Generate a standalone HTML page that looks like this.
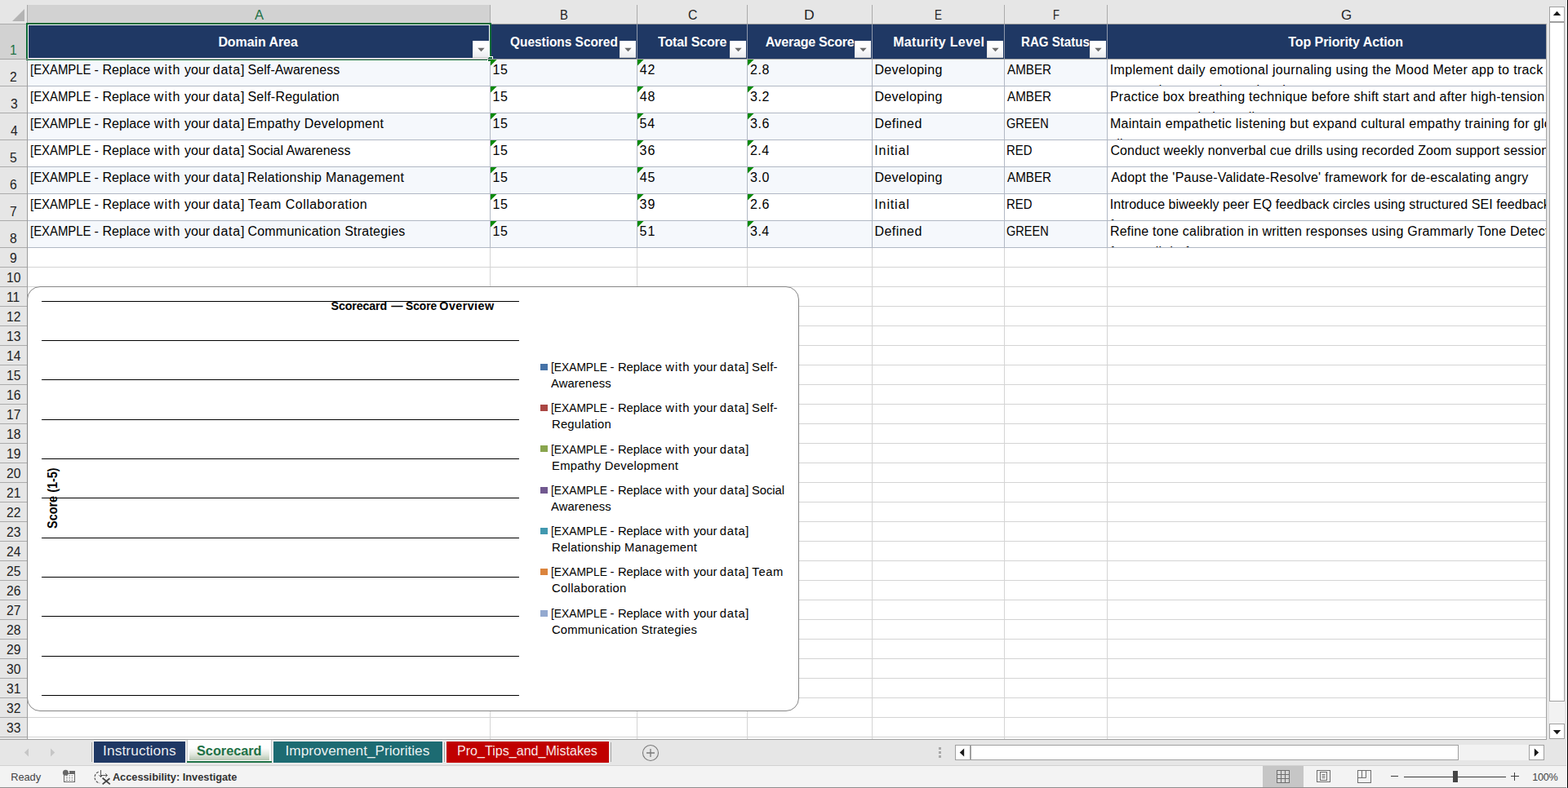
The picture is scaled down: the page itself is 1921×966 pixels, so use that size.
<!DOCTYPE html>
<html lang="en"><head><meta charset="utf-8"><title>Scorecard</title>
<style>
html,body{margin:0;padding:0}
body{width:1921px;height:966px;overflow:hidden;position:relative;background:#e6e6e6;font-family:"Liberation Sans", sans-serif;font-size:16px;color:#000}
div,span,svg{position:absolute;display:block}
span{white-space:pre}
i{font-style:normal}
.g{overflow:hidden}
.g span{font-size:16px}
</style></head>
<body>
<div style="left:0px;top:0px;width:1921px;height:966px;background:#e6e6e6;"></div>
<div style="left:34px;top:30px;width:1860px;height:876px;background:#fff;"></div>
<div style="left:34px;top:6px;width:566px;height:22px;background:#d2d2d2;"></div>
<div style="left:0px;top:30px;width:32px;height:42px;background:#d2d2d2;"></div>
<div style="left:33px;top:6px;width:1px;height:24px;background:#ababab;"></div>
<div style="left:600px;top:6px;width:1px;height:24px;background:#ababab;"></div>
<div style="left:780px;top:6px;width:1px;height:24px;background:#ababab;"></div>
<div style="left:915px;top:6px;width:1px;height:24px;background:#ababab;"></div>
<div style="left:1068px;top:6px;width:1px;height:24px;background:#ababab;"></div>
<div style="left:1230px;top:6px;width:1px;height:24px;background:#ababab;"></div>
<div style="left:1356px;top:6px;width:1px;height:24px;background:#ababab;"></div>
<div style="left:34px;top:29px;width:1860px;height:1px;background:#9c9c9c;"></div>
<div style="left:0px;top:29px;width:33px;height:1px;background:#ababab;"></div>
<div style="left:0px;top:72px;width:33px;height:1px;background:#ababab;"></div>
<div style="left:0px;top:105px;width:33px;height:1px;background:#ababab;"></div>
<div style="left:0px;top:138px;width:33px;height:1px;background:#ababab;"></div>
<div style="left:0px;top:171px;width:33px;height:1px;background:#ababab;"></div>
<div style="left:0px;top:204px;width:33px;height:1px;background:#ababab;"></div>
<div style="left:0px;top:237px;width:33px;height:1px;background:#ababab;"></div>
<div style="left:0px;top:270px;width:33px;height:1px;background:#ababab;"></div>
<div style="left:0px;top:303px;width:33px;height:1px;background:#ababab;"></div>
<div style="left:0px;top:327px;width:33px;height:1px;background:#ababab;"></div>
<div style="left:0px;top:351px;width:33px;height:1px;background:#ababab;"></div>
<div style="left:0px;top:375px;width:33px;height:1px;background:#ababab;"></div>
<div style="left:0px;top:399px;width:33px;height:1px;background:#ababab;"></div>
<div style="left:0px;top:423px;width:33px;height:1px;background:#ababab;"></div>
<div style="left:0px;top:447px;width:33px;height:1px;background:#ababab;"></div>
<div style="left:0px;top:471px;width:33px;height:1px;background:#ababab;"></div>
<div style="left:0px;top:495px;width:33px;height:1px;background:#ababab;"></div>
<div style="left:0px;top:519px;width:33px;height:1px;background:#ababab;"></div>
<div style="left:0px;top:543px;width:33px;height:1px;background:#ababab;"></div>
<div style="left:0px;top:567px;width:33px;height:1px;background:#ababab;"></div>
<div style="left:0px;top:591px;width:33px;height:1px;background:#ababab;"></div>
<div style="left:0px;top:615px;width:33px;height:1px;background:#ababab;"></div>
<div style="left:0px;top:639px;width:33px;height:1px;background:#ababab;"></div>
<div style="left:0px;top:663px;width:33px;height:1px;background:#ababab;"></div>
<div style="left:0px;top:687px;width:33px;height:1px;background:#ababab;"></div>
<div style="left:0px;top:711px;width:33px;height:1px;background:#ababab;"></div>
<div style="left:0px;top:735px;width:33px;height:1px;background:#ababab;"></div>
<div style="left:0px;top:759px;width:33px;height:1px;background:#ababab;"></div>
<div style="left:0px;top:783px;width:33px;height:1px;background:#ababab;"></div>
<div style="left:0px;top:807px;width:33px;height:1px;background:#ababab;"></div>
<div style="left:0px;top:831px;width:33px;height:1px;background:#ababab;"></div>
<div style="left:0px;top:855px;width:33px;height:1px;background:#ababab;"></div>
<div style="left:0px;top:879px;width:33px;height:1px;background:#ababab;"></div>
<div style="left:0px;top:903px;width:33px;height:1px;background:#ababab;"></div>
<div style="left:33px;top:30px;width:1px;height:876px;background:#9c9c9c;"></div>
<svg style="left:14px;top:9px" width="17" height="18" viewBox="0 0 17 18"><path d="M16 2V17H1Z" fill="#b4b4b4"/></svg>
<div style="left:34px;top:327px;width:1860px;height:1px;background:#d4d4d4;"></div>
<div style="left:34px;top:351px;width:1860px;height:1px;background:#d4d4d4;"></div>
<div style="left:34px;top:375px;width:1860px;height:1px;background:#d4d4d4;"></div>
<div style="left:34px;top:399px;width:1860px;height:1px;background:#d4d4d4;"></div>
<div style="left:34px;top:423px;width:1860px;height:1px;background:#d4d4d4;"></div>
<div style="left:34px;top:447px;width:1860px;height:1px;background:#d4d4d4;"></div>
<div style="left:34px;top:471px;width:1860px;height:1px;background:#d4d4d4;"></div>
<div style="left:34px;top:495px;width:1860px;height:1px;background:#d4d4d4;"></div>
<div style="left:34px;top:519px;width:1860px;height:1px;background:#d4d4d4;"></div>
<div style="left:34px;top:543px;width:1860px;height:1px;background:#d4d4d4;"></div>
<div style="left:34px;top:567px;width:1860px;height:1px;background:#d4d4d4;"></div>
<div style="left:34px;top:591px;width:1860px;height:1px;background:#d4d4d4;"></div>
<div style="left:34px;top:615px;width:1860px;height:1px;background:#d4d4d4;"></div>
<div style="left:34px;top:639px;width:1860px;height:1px;background:#d4d4d4;"></div>
<div style="left:34px;top:663px;width:1860px;height:1px;background:#d4d4d4;"></div>
<div style="left:34px;top:687px;width:1860px;height:1px;background:#d4d4d4;"></div>
<div style="left:34px;top:711px;width:1860px;height:1px;background:#d4d4d4;"></div>
<div style="left:34px;top:735px;width:1860px;height:1px;background:#d4d4d4;"></div>
<div style="left:34px;top:759px;width:1860px;height:1px;background:#d4d4d4;"></div>
<div style="left:34px;top:783px;width:1860px;height:1px;background:#d4d4d4;"></div>
<div style="left:34px;top:807px;width:1860px;height:1px;background:#d4d4d4;"></div>
<div style="left:34px;top:831px;width:1860px;height:1px;background:#d4d4d4;"></div>
<div style="left:34px;top:855px;width:1860px;height:1px;background:#d4d4d4;"></div>
<div style="left:34px;top:879px;width:1860px;height:1px;background:#d4d4d4;"></div>
<div style="left:34px;top:903px;width:1860px;height:1px;background:#d4d4d4;"></div>
<div style="left:600px;top:304px;width:1px;height:602px;background:#d4d4d4;"></div>
<div style="left:780px;top:304px;width:1px;height:602px;background:#d4d4d4;"></div>
<div style="left:915px;top:304px;width:1px;height:602px;background:#d4d4d4;"></div>
<div style="left:1068px;top:304px;width:1px;height:602px;background:#d4d4d4;"></div>
<div style="left:1230px;top:304px;width:1px;height:602px;background:#d4d4d4;"></div>
<div style="left:1356px;top:304px;width:1px;height:602px;background:#d4d4d4;"></div>
<div style="left:34px;top:30px;width:1860px;height:42px;background:#1f3864;"></div>
<div style="left:600px;top:30px;width:1px;height:42px;background:#8f98ab;"></div>
<div style="left:780px;top:30px;width:1px;height:42px;background:#8f98ab;"></div>
<div style="left:915px;top:30px;width:1px;height:42px;background:#8f98ab;"></div>
<div style="left:1068px;top:30px;width:1px;height:42px;background:#8f98ab;"></div>
<div style="left:1230px;top:30px;width:1px;height:42px;background:#8f98ab;"></div>
<div style="left:1356px;top:30px;width:1px;height:42px;background:#8f98ab;"></div>
<div style="left:34px;top:73px;width:1322px;height:32px;background:#f5f8fc;"></div>
<div style="left:34px;top:139px;width:1322px;height:32px;background:#f5f8fc;"></div>
<div style="left:34px;top:205px;width:1322px;height:32px;background:#f5f8fc;"></div>
<div style="left:34px;top:271px;width:1322px;height:32px;background:#f5f8fc;"></div>
<div style="left:34px;top:72px;width:1860px;height:1px;background:#b1b8c4;"></div>
<div style="left:34px;top:105px;width:1860px;height:1px;background:#b1b8c4;"></div>
<div style="left:34px;top:138px;width:1860px;height:1px;background:#b1b8c4;"></div>
<div style="left:34px;top:171px;width:1860px;height:1px;background:#b1b8c4;"></div>
<div style="left:34px;top:204px;width:1860px;height:1px;background:#b1b8c4;"></div>
<div style="left:34px;top:237px;width:1860px;height:1px;background:#b1b8c4;"></div>
<div style="left:34px;top:270px;width:1860px;height:1px;background:#b1b8c4;"></div>
<div style="left:34px;top:303px;width:1860px;height:1px;background:#b1b8c4;"></div>
<div style="left:600px;top:72px;width:1px;height:232px;background:#b1b8c4;"></div>
<div style="left:780px;top:72px;width:1px;height:232px;background:#b1b8c4;"></div>
<div style="left:915px;top:72px;width:1px;height:232px;background:#b1b8c4;"></div>
<div style="left:1068px;top:72px;width:1px;height:232px;background:#b1b8c4;"></div>
<div style="left:1230px;top:72px;width:1px;height:232px;background:#b1b8c4;"></div>
<div style="left:1356px;top:72px;width:1px;height:232px;background:#b1b8c4;"></div>
<div style="left:1894px;top:29px;width:1px;height:878px;background:#a3a3a3;"></div>
<div style="left:34px;top:73px;width:571px;height:2px;background:#fff;"></div>
<div style="left:32px;top:28px;width:570px;height:2px;background:#0e6b38;"></div>
<div style="left:32px;top:28px;width:2px;height:46px;background:#0e6b38;"></div>
<div style="left:32px;top:73px;width:565px;height:1px;background:#217346;"></div>
<div style="left:600px;top:28px;width:2px;height:41px;background:#0e6b38;"></div>
<div style="left:34px;top:30px;width:566px;height:1px;background:#fff;"></div>
<div style="left:34px;top:30px;width:1px;height:42px;background:#fff;"></div>
<div style="left:34px;top:71px;width:566px;height:1px;background:#fff;"></div>
<div style="left:599px;top:30px;width:1px;height:39px;background:#fff;"></div>
<div style="left:597px;top:69px;width:7px;height:7px;background:#fff;"></div>
<div style="left:598px;top:70px;width:5px;height:5px;background:#0e6b38;"></div>
<div style="left:579px;top:50px;width:20px;height:21px;background:linear-gradient(#fff 0%,#fcfcfd 45%,#e9eaee 100%);box-shadow:inset 0 -1px 0 #c9c9c9,inset 1px 0 0 #e6e6e6"></div>
<svg style="left:585px;top:58px" width="9" height="6" viewBox="0 0 9 6"><path d="M0.3 0.8H8.7L4.5 5.2Z" fill="#6b6b6b"/></svg>
<div style="left:759px;top:50px;width:20px;height:21px;background:linear-gradient(#fff 0%,#fcfcfd 45%,#e9eaee 100%);box-shadow:inset 0 -1px 0 #c9c9c9,inset 1px 0 0 #e6e6e6"></div>
<svg style="left:765px;top:58px" width="9" height="6" viewBox="0 0 9 6"><path d="M0.3 0.8H8.7L4.5 5.2Z" fill="#6b6b6b"/></svg>
<div style="left:894px;top:50px;width:20px;height:21px;background:linear-gradient(#fff 0%,#fcfcfd 45%,#e9eaee 100%);box-shadow:inset 0 -1px 0 #c9c9c9,inset 1px 0 0 #e6e6e6"></div>
<svg style="left:900px;top:58px" width="9" height="6" viewBox="0 0 9 6"><path d="M0.3 0.8H8.7L4.5 5.2Z" fill="#6b6b6b"/></svg>
<div style="left:1047px;top:50px;width:20px;height:21px;background:linear-gradient(#fff 0%,#fcfcfd 45%,#e9eaee 100%);box-shadow:inset 0 -1px 0 #c9c9c9,inset 1px 0 0 #e6e6e6"></div>
<svg style="left:1053px;top:58px" width="9" height="6" viewBox="0 0 9 6"><path d="M0.3 0.8H8.7L4.5 5.2Z" fill="#6b6b6b"/></svg>
<div style="left:1209px;top:50px;width:20px;height:21px;background:linear-gradient(#fff 0%,#fcfcfd 45%,#e9eaee 100%);box-shadow:inset 0 -1px 0 #c9c9c9,inset 1px 0 0 #e6e6e6"></div>
<svg style="left:1215px;top:58px" width="9" height="6" viewBox="0 0 9 6"><path d="M0.3 0.8H8.7L4.5 5.2Z" fill="#6b6b6b"/></svg>
<div style="left:1335px;top:50px;width:20px;height:21px;background:linear-gradient(#fff 0%,#fcfcfd 45%,#e9eaee 100%);box-shadow:inset 0 -1px 0 #c9c9c9,inset 1px 0 0 #e6e6e6"></div>
<svg style="left:1341px;top:58px" width="9" height="6" viewBox="0 0 9 6"><path d="M0.3 0.8H8.7L4.5 5.2Z" fill="#6b6b6b"/></svg>
<svg style="left:601px;top:73px" width="8" height="8" viewBox="0 0 8 8"><path d="M0 0H7.6L0 7.6Z" fill="#0a8a0a"/></svg>
<svg style="left:781px;top:73px" width="8" height="8" viewBox="0 0 8 8"><path d="M0 0H7.6L0 7.6Z" fill="#0a8a0a"/></svg>
<svg style="left:916px;top:73px" width="8" height="8" viewBox="0 0 8 8"><path d="M0 0H7.6L0 7.6Z" fill="#0a8a0a"/></svg>
<svg style="left:601px;top:106px" width="8" height="8" viewBox="0 0 8 8"><path d="M0 0H7.6L0 7.6Z" fill="#0a8a0a"/></svg>
<svg style="left:781px;top:106px" width="8" height="8" viewBox="0 0 8 8"><path d="M0 0H7.6L0 7.6Z" fill="#0a8a0a"/></svg>
<svg style="left:916px;top:106px" width="8" height="8" viewBox="0 0 8 8"><path d="M0 0H7.6L0 7.6Z" fill="#0a8a0a"/></svg>
<svg style="left:601px;top:139px" width="8" height="8" viewBox="0 0 8 8"><path d="M0 0H7.6L0 7.6Z" fill="#0a8a0a"/></svg>
<svg style="left:781px;top:139px" width="8" height="8" viewBox="0 0 8 8"><path d="M0 0H7.6L0 7.6Z" fill="#0a8a0a"/></svg>
<svg style="left:916px;top:139px" width="8" height="8" viewBox="0 0 8 8"><path d="M0 0H7.6L0 7.6Z" fill="#0a8a0a"/></svg>
<svg style="left:601px;top:172px" width="8" height="8" viewBox="0 0 8 8"><path d="M0 0H7.6L0 7.6Z" fill="#0a8a0a"/></svg>
<svg style="left:781px;top:172px" width="8" height="8" viewBox="0 0 8 8"><path d="M0 0H7.6L0 7.6Z" fill="#0a8a0a"/></svg>
<svg style="left:916px;top:172px" width="8" height="8" viewBox="0 0 8 8"><path d="M0 0H7.6L0 7.6Z" fill="#0a8a0a"/></svg>
<svg style="left:601px;top:205px" width="8" height="8" viewBox="0 0 8 8"><path d="M0 0H7.6L0 7.6Z" fill="#0a8a0a"/></svg>
<svg style="left:781px;top:205px" width="8" height="8" viewBox="0 0 8 8"><path d="M0 0H7.6L0 7.6Z" fill="#0a8a0a"/></svg>
<svg style="left:916px;top:205px" width="8" height="8" viewBox="0 0 8 8"><path d="M0 0H7.6L0 7.6Z" fill="#0a8a0a"/></svg>
<svg style="left:601px;top:238px" width="8" height="8" viewBox="0 0 8 8"><path d="M0 0H7.6L0 7.6Z" fill="#0a8a0a"/></svg>
<svg style="left:781px;top:238px" width="8" height="8" viewBox="0 0 8 8"><path d="M0 0H7.6L0 7.6Z" fill="#0a8a0a"/></svg>
<svg style="left:916px;top:238px" width="8" height="8" viewBox="0 0 8 8"><path d="M0 0H7.6L0 7.6Z" fill="#0a8a0a"/></svg>
<svg style="left:601px;top:271px" width="8" height="8" viewBox="0 0 8 8"><path d="M0 0H7.6L0 7.6Z" fill="#0a8a0a"/></svg>
<svg style="left:781px;top:271px" width="8" height="8" viewBox="0 0 8 8"><path d="M0 0H7.6L0 7.6Z" fill="#0a8a0a"/></svg>
<svg style="left:916px;top:271px" width="8" height="8" viewBox="0 0 8 8"><path d="M0 0H7.6L0 7.6Z" fill="#0a8a0a"/></svg>
<div style="left:0px;top:72px;width:1894px;height:1px;background:#a3a3a3;"></div>
<div class="g" style="left:1357px;top:73px;width:537px;height:32px"><span style="left:2.72px;top:3px;line-height:20px;letter-spacing:0.341px;">Implement daily emotional journaling using the Mood Meter app to track</span><span style="left:2.72px;top:28px;line-height:20px;letter-spacing:0.341px;">stress triggers and emotional patterns</span></div>
<div class="g" style="left:1357px;top:106px;width:537px;height:32px"><span style="left:2.89px;top:3px;line-height:20px;letter-spacing:0.285px;">Practice box breathing technique before shift start and after high-tension</span><span style="left:2.89px;top:28px;line-height:20px;letter-spacing:0.285px;">customer escalation calls</span></div>
<div class="g" style="left:1357px;top:139px;width:537px;height:32px"><span style="left:2.89px;top:3px;line-height:20px;letter-spacing:0.318px;">Maintain empathetic listening but expand cultural empathy training for global</span><span style="left:2.89px;top:28px;line-height:20px;letter-spacing:0.318px;">clients</span></div>
<div class="g" style="left:1357px;top:172px;width:537px;height:32px"><span style="left:3.39px;top:3px;line-height:20px;letter-spacing:0.133px;">Conduct weekly nonverbal cue drills using recorded Zoom support sessions</span></div>
<div class="g" style="left:1357px;top:205px;width:537px;height:32px"><span style="left:4.17px;top:3px;line-height:20px;letter-spacing:0.227px;">Adopt the &#x27;Pause-Validate-Resolve&#x27; framework for de-escalating angry</span></div>
<div class="g" style="left:1357px;top:238px;width:537px;height:32px"><span style="left:2.72px;top:3px;line-height:20px;letter-spacing:0.075px;">Introduce biweekly peer EQ feedback circles using structured SEI feedback</span><span style="left:2.72px;top:28px;line-height:20px;letter-spacing:0.075px;">forms</span></div>
<div class="g" style="left:1357px;top:271px;width:537px;height:32px"><span style="left:2.89px;top:3px;line-height:20px;letter-spacing:0.222px;">Refine tone calibration in written responses using Grammarly Tone Detector</span><span style="left:2.89px;top:28px;line-height:20px;letter-spacing:0.222px;">for email drafts</span></div>
<div style="left:33px;top:351px;width:946px;height:521px;box-sizing:border-box;border:1px solid #868686;border-radius:16px;background:#fff"></div>
<div style="left:51px;top:369px;width:585px;height:1px;background:#000"></div>
<div style="left:51px;top:417px;width:585px;height:1px;background:#000"></div>
<div style="left:51px;top:465px;width:585px;height:1px;background:#000"></div>
<div style="left:51px;top:514px;width:585px;height:1px;background:#000"></div>
<div style="left:51px;top:562px;width:585px;height:1px;background:#000"></div>
<div style="left:51px;top:610px;width:585px;height:1px;background:#000"></div>
<div style="left:51px;top:659px;width:585px;height:1px;background:#000"></div>
<div style="left:51px;top:707px;width:585px;height:1px;background:#000"></div>
<div style="left:51px;top:755px;width:585px;height:1px;background:#000"></div>
<div style="left:51px;top:804px;width:585px;height:1px;background:#000"></div>
<div style="left:51px;top:852px;width:585px;height:1px;background:#000"></div>
<div style="left:662px;top:446px;width:9px;height:8px;background:#4572a7"></div>
<div style="left:662px;top:496px;width:9px;height:8px;background:#aa4643"></div>
<div style="left:662px;top:546px;width:9px;height:8px;background:#89a54e"></div>
<div style="left:662px;top:597px;width:9px;height:8px;background:#71588f"></div>
<div style="left:662px;top:647px;width:9px;height:8px;background:#4198af"></div>
<div style="left:662px;top:697px;width:9px;height:8px;background:#db843d"></div>
<div style="left:662px;top:748px;width:9px;height:8px;background:#93a9cf"></div>
<span style="left:70px;top:634.02px;font-size:14.44px;line-height:18px;font-weight:700;transform-origin:0 14px;transform:rotate(-90deg) scale(1,1.09)">Score (1-5)</span>
<div style="left:0px;top:906px;width:1895px;height:1px;background:#a0a0a0;"></div>
<div style="left:0px;top:907px;width:1921px;height:31px;background:#e6e6e6;"></div>
<div style="left:0px;top:938px;width:1921px;height:1px;background:#d2d2d2;"></div>
<div style="left:0px;top:939px;width:1921px;height:26px;background:#f3f3f3;"></div>
<div style="left:0px;top:965px;width:1921px;height:1px;background:#8f8f8f;"></div>
<svg style="left:29px;top:917px" width="7" height="11" viewBox="0 0 7 11"><path d="M6 0.5V10.5L0.8 5.5Z" fill="#c6c6c6"/></svg>
<svg style="left:61px;top:917px" width="7" height="11" viewBox="0 0 7 11"><path d="M1 0.5V10.5L6.2 5.5Z" fill="#c6c6c6"/></svg>
<div style="left:112px;top:910px;width:1px;height:24px;background:#a6a6a6;"></div>
<div style="left:114px;top:908px;width:114px;height:28px;background:#f1f1f1;"></div>
<div style="left:115px;top:909px;width:112px;height:26px;background:#1f3864;"></div>
<div style="left:229px;top:907px;width:104px;height:28px;background:#fff;box-shadow:inset 1px 0 0 #c9c9c9,inset -1px 0 0 #c9c9c9"></div>
<div style="left:232px;top:909px;width:98px;height:23px;background:linear-gradient(#fff 0%,#fdfdfd 35%,#dfe6dc 70%,#b5c4b0 100%);"></div>
<div style="left:229px;top:933px;width:104px;height:2px;background:#1e7145;"></div>
<div style="left:334px;top:908px;width:209px;height:28px;background:#f1f1f1;"></div>
<div style="left:335px;top:909px;width:207px;height:26px;background:#1d6b72;"></div>
<div style="left:544px;top:910px;width:1px;height:24px;background:#a6a6a6;"></div>
<div style="left:546px;top:908px;width:201px;height:28px;background:#f1f1f1;"></div>
<div style="left:547px;top:909px;width:199px;height:26px;background:#c00000;"></div>
<div style="left:748px;top:910px;width:1px;height:24px;background:#a6a6a6;"></div>
<svg style="left:786px;top:912px" width="22" height="22" viewBox="0 0 22 22"><circle cx="11" cy="11" r="9.5" fill="none" stroke="#7a7a7a" stroke-width="1.1"/><path d="M6 11H16M11 6V16" stroke="#7a7a7a" stroke-width="1.3" fill="none"/></svg>
<div style="left:1150px;top:916px;width:3px;height:3px;background:#a8a8a8;"></div>
<div style="left:1150px;top:921px;width:3px;height:3px;background:#a8a8a8;"></div>
<div style="left:1150px;top:926px;width:3px;height:3px;background:#a8a8a8;"></div>
<div style="left:1787px;top:913px;width:86px;height:19px;background:#f2f2f2;"></div>
<div style="left:1170px;top:913px;width:19px;height:19px;background:#fff;box-sizing:border-box;border:1px solid #a0a0a0;"></div>
<div style="left:1189px;top:913px;width:598px;height:19px;background:#fff;box-sizing:border-box;border:1px solid #a0a0a0;"></div>
<div style="left:1873px;top:913px;width:19px;height:19px;background:#fff;box-sizing:border-box;border:1px solid #a0a0a0;"></div>
<svg style="left:1175px;top:917px" width="7" height="11" viewBox="0 0 7 11"><path d="M6.2 0.6V10.4L0.8 5.5Z" fill="#1a1a1a"/></svg>
<svg style="left:1879px;top:917px" width="7" height="11" viewBox="0 0 7 11"><path d="M0.8 0.6V10.4L6.2 5.5Z" fill="#1a1a1a"/></svg>
<div style="left:1898px;top:860px;width:19px;height:27px;background:#f2f2f2;"></div>
<div style="left:1898px;top:8px;width:19px;height:19px;background:#fff;box-sizing:border-box;border:1px solid #a0a0a0;"></div>
<div style="left:1898px;top:27px;width:19px;height:833px;background:#fff;box-sizing:border-box;border:1px solid #a0a0a0;"></div>
<div style="left:1898px;top:887px;width:19px;height:19px;background:#fff;box-sizing:border-box;border:1px solid #a0a0a0;"></div>
<svg style="left:1902px;top:13px" width="11" height="7" viewBox="0 0 11 7"><path d="M0.8 6H10.2L5.5 0.8Z" fill="#1a1a1a"/></svg>
<svg style="left:1902px;top:894px" width="11" height="7" viewBox="0 0 11 7"><path d="M0.8 1H10.2L5.5 6.2Z" fill="#1a1a1a"/></svg>
<div style="left:1919px;top:0px;width:1px;height:966px;background:#f4f4f4;"></div>
<div style="left:1920px;top:0px;width:1px;height:966px;background:#000;"></div>
<div style="left:1547px;top:939px;width:50px;height:26px;background:#c6c6c6;"></div>
<svg style="left:1564px;top:944px" width="16" height="16" viewBox="0 0 16 16"><rect x="0.5" y="0.5" width="15" height="15" fill="#d6d6d6" stroke="#6e6e6e"/><path d="M5.5 0.5V15.5M10.5 0.5V15.5M0.5 5.5H15.5M0.5 10.5H15.5" stroke="#6e6e6e" fill="none"/></svg>
<svg style="left:1613px;top:944px" width="17" height="15" viewBox="0 0 17 15"><rect x="0.5" y="0.5" width="16" height="14" fill="#f3f3f3" stroke="#6e6e6e"/><rect x="4.5" y="2.5" width="8" height="10" fill="#f3f3f3" stroke="#6e6e6e"/><path d="M6.5 5.5H10.5M6.5 7.5H10.5M6.5 9.5H10.5" stroke="#6e6e6e" fill="none"/></svg>
<svg style="left:1663px;top:944px" width="17" height="16" viewBox="0 0 17 16"><rect x="0.5" y="0.5" width="16" height="15" fill="#f3f3f3" stroke="#6e6e6e"/><path d="M0.5 9.5H10.5V0.5M5.5 0.5V9.5" stroke="#6e6e6e" fill="none"/></svg>
<div style="left:1704px;top:951px;width:9px;height:1px;background:#3c3c3c;"></div>
<div style="left:1720px;top:952px;width:125px;height:1px;background:#3c3c3c;"></div>
<div style="left:1780px;top:945px;width:6px;height:14px;background:#444;"></div>
<div style="left:1851px;top:951px;width:10px;height:1px;background:#3c3c3c;"></div>
<div style="left:1855px;top:947px;width:1px;height:10px;background:#3c3c3c;"></div>
<svg style="left:76px;top:943px" width="17" height="17" viewBox="0 0 17 17"><rect x="2.5" y="5.5" width="13" height="10" fill="#fff" stroke="#666"/><rect x="9" y="2" width="7" height="3.6" fill="#666"/><circle cx="4.4" cy="4.3" r="3.5" fill="#666"/><path d="M5 8H14M5 10.7H14M5 13.4H14" stroke="#666" stroke-width="0.9" stroke-dasharray="2 1.2" fill="none"/></svg>
<svg style="left:115px;top:943px" width="22" height="20" viewBox="0 0 22 20"><path d="M5.6 3.2A7.2 7.2 0 0 0 7.2 17" fill="none" stroke="#555" stroke-width="1.2" stroke-dasharray="3 1.5"/><path d="M8.5 1V9.2M6.3 7.2L8.5 9.6L10.7 7.2M8.5 7.5H16.2M14.2 5.4L16.5 7.5L14.2 9.6" fill="none" stroke="#555" stroke-width="1"/><path d="M10.6 10.8L19.8 18.4M19.4 11.2L10.6 18.4" stroke="#444" stroke-width="1.8" fill="none"/></svg>
<span style="left:312.07px;top:8px;font-size:17px;line-height:21px;color:#1e7145;transform-origin:0 16px;transform:scale(0.9758,1.0000);">A</span>
<span style="left:686.03px;top:8px;font-size:17px;line-height:21px;color:#222;transform-origin:0 16px;transform:scale(0.8731,1.0000);">B</span>
<span style="left:842.70px;top:8px;font-size:17px;line-height:21px;color:#222;transform-origin:0 16px;transform:scale(0.9288,1.0000);">C</span>
<span style="left:985.46px;top:8px;font-size:17px;line-height:21px;color:#222;transform-origin:0 16px;transform:scale(1.0329,1.0000);">D</span>
<span style="left:1145.25px;top:8px;font-size:17px;line-height:21px;color:#222;transform-origin:0 16px;transform:scale(0.7923,1.0000);">E</span>
<span style="left:1290.03px;top:8px;font-size:17px;line-height:21px;color:#222;transform-origin:0 16px;transform:scale(0.7702,1.0000);">F</span>
<span style="left:1642.85px;top:8px;font-size:17px;line-height:21px;color:#222;transform-origin:0 16px;transform:scale(0.9912,1.0000);">G</span>
<span style="left:12.24px;top:51px;font-size:17px;line-height:21px;color:#1e7145;transform-origin:0 16px;transform:scale(0.9200,1.0000);">1</span>
<span style="left:12.45px;top:84px;font-size:17px;line-height:21px;color:#222;transform-origin:0 16px;transform:scale(0.9200,1.0000);">2</span>
<span style="left:12.50px;top:117px;font-size:17px;line-height:21px;color:#222;transform-origin:0 16px;transform:scale(0.9200,1.0000);">3</span>
<span style="left:12.50px;top:150px;font-size:17px;line-height:21px;color:#222;transform-origin:0 16px;transform:scale(0.9200,1.0000);">4</span>
<span style="left:12.47px;top:183px;font-size:17px;line-height:21px;color:#222;transform-origin:0 16px;transform:scale(0.9200,1.0000);">5</span>
<span style="left:12.40px;top:216px;font-size:17px;line-height:21px;color:#222;transform-origin:0 16px;transform:scale(0.9200,1.0000);">6</span>
<span style="left:12.44px;top:249px;font-size:17px;line-height:21px;color:#222;transform-origin:0 16px;transform:scale(0.9200,1.0000);">7</span>
<span style="left:12.45px;top:282px;font-size:17px;line-height:21px;color:#222;transform-origin:0 16px;transform:scale(0.9200,1.0000);">8</span>
<span style="left:12.45px;top:306px;font-size:17px;line-height:21px;color:#222;transform-origin:0 16px;transform:scale(0.9200,1.0000);">9</span>
<span style="left:7.81px;top:330px;font-size:17px;line-height:21px;color:#222;transform-origin:0 16px;transform:scale(0.9200,1.0000);">10</span>
<span style="left:8.47px;top:354px;font-size:17px;line-height:21px;color:#222;transform-origin:0 16px;transform:scale(0.9200,1.0000);">11</span>
<span style="left:7.90px;top:378px;font-size:17px;line-height:21px;color:#222;transform-origin:0 16px;transform:scale(0.9200,1.0000);">12</span>
<span style="left:7.85px;top:402px;font-size:17px;line-height:21px;color:#222;transform-origin:0 16px;transform:scale(0.9200,1.0000);">13</span>
<span style="left:7.74px;top:426px;font-size:17px;line-height:21px;color:#222;transform-origin:0 16px;transform:scale(0.9200,1.0000);">14</span>
<span style="left:7.83px;top:450px;font-size:17px;line-height:21px;color:#222;transform-origin:0 16px;transform:scale(0.9200,1.0000);">15</span>
<span style="left:7.85px;top:474px;font-size:17px;line-height:21px;color:#222;transform-origin:0 16px;transform:scale(0.9200,1.0000);">16</span>
<span style="left:7.90px;top:498px;font-size:17px;line-height:21px;color:#222;transform-origin:0 16px;transform:scale(0.9200,1.0000);">17</span>
<span style="left:7.85px;top:522px;font-size:17px;line-height:21px;color:#222;transform-origin:0 16px;transform:scale(0.9200,1.0000);">18</span>
<span style="left:7.88px;top:546px;font-size:17px;line-height:21px;color:#222;transform-origin:0 16px;transform:scale(0.9200,1.0000);">19</span>
<span style="left:8.01px;top:570px;font-size:17px;line-height:21px;color:#222;transform-origin:0 16px;transform:scale(0.9200,1.0000);">20</span>
<span style="left:8.09px;top:594px;font-size:17px;line-height:21px;color:#222;transform-origin:0 16px;transform:scale(0.9200,1.0000);">21</span>
<span style="left:8.10px;top:618px;font-size:17px;line-height:21px;color:#222;transform-origin:0 16px;transform:scale(0.9200,1.0000);">22</span>
<span style="left:8.05px;top:642px;font-size:17px;line-height:21px;color:#222;transform-origin:0 16px;transform:scale(0.9200,1.0000);">23</span>
<span style="left:7.94px;top:666px;font-size:17px;line-height:21px;color:#222;transform-origin:0 16px;transform:scale(0.9200,1.0000);">24</span>
<span style="left:8.04px;top:690px;font-size:17px;line-height:21px;color:#222;transform-origin:0 16px;transform:scale(0.9200,1.0000);">25</span>
<span style="left:8.05px;top:714px;font-size:17px;line-height:21px;color:#222;transform-origin:0 16px;transform:scale(0.9200,1.0000);">26</span>
<span style="left:8.10px;top:738px;font-size:17px;line-height:21px;color:#222;transform-origin:0 16px;transform:scale(0.9200,1.0000);">27</span>
<span style="left:8.05px;top:762px;font-size:17px;line-height:21px;color:#222;transform-origin:0 16px;transform:scale(0.9200,1.0000);">28</span>
<span style="left:8.08px;top:786px;font-size:17px;line-height:21px;color:#222;transform-origin:0 16px;transform:scale(0.9200,1.0000);">29</span>
<span style="left:8.11px;top:810px;font-size:17px;line-height:21px;color:#222;transform-origin:0 16px;transform:scale(0.9200,1.0000);">30</span>
<span style="left:8.19px;top:834px;font-size:17px;line-height:21px;color:#222;transform-origin:0 16px;transform:scale(0.9200,1.0000);">31</span>
<span style="left:8.20px;top:858px;font-size:17px;line-height:21px;color:#222;transform-origin:0 16px;transform:scale(0.9200,1.0000);">32</span>
<span style="left:8.15px;top:882px;font-size:17px;line-height:21px;color:#222;transform-origin:0 16px;transform:scale(0.9200,1.0000);">33</span>
<span style="left:267.38px;top:42px;font-size:16px;line-height:20px;color:#fff;font-weight:700;letter-spacing:-0.063px;transform-origin:0 15px;transform:scale(1.0000,1.0300);">Domain Area</span>
<span style="left:624.67px;top:42px;font-size:16px;line-height:20px;color:#fff;font-weight:700;transform-origin:0 15px;transform:scale(0.9629,1.0300);">Questions Scored</span>
<span style="left:806.07px;top:42px;font-size:16px;line-height:20px;color:#fff;font-weight:700;letter-spacing:-0.152px;transform-origin:0 15px;transform:scale(1.0000,1.0300);">Total Score</span>
<span style="left:937.85px;top:42px;font-size:16px;line-height:20px;color:#fff;font-weight:700;letter-spacing:-0.219px;transform-origin:0 15px;transform:scale(1.0000,1.0300);">Average Score</span>
<span style="left:1094.23px;top:42px;font-size:16px;line-height:20px;color:#fff;font-weight:700;letter-spacing:0.309px;transform-origin:0 15px;transform:scale(1.0000,1.0300);">Maturity Level</span>
<span style="left:1251.49px;top:42px;font-size:16px;line-height:20px;color:#fff;font-weight:700;transform-origin:0 15px;transform:scale(0.9430,1.0300);">RAG Status</span>
<span style="left:1578.37px;top:42px;font-size:16px;line-height:20px;color:#fff;font-weight:700;letter-spacing:-0.086px;transform-origin:0 15px;transform:scale(1.0000,1.0300);">Top Priority Action</span>
<span style="left:603.48px;top:76px;font-size:16px;line-height:20px;color:#000;letter-spacing:0.694px;">15</span>
<span style="left:783.83px;top:76px;font-size:16px;line-height:20px;color:#000;letter-spacing:0.875px;">42</span>
<span style="left:918.90px;top:76px;font-size:16px;line-height:20px;color:#000;letter-spacing:0.629px;">2.8</span>
<span style="left:1071.49px;top:76px;font-size:16px;line-height:20px;color:#000;letter-spacing:0.310px;">Developing</span>
<span style="left:1234.17px;top:76px;font-size:16px;line-height:20px;color:#000;transform-origin:0 15px;transform:scale(0.9497,1.0000);">AMBER</span>
<span style="left:603.48px;top:109px;font-size:16px;line-height:20px;color:#000;letter-spacing:0.694px;">15</span>
<span style="left:783.83px;top:109px;font-size:16px;line-height:20px;color:#000;letter-spacing:0.766px;">48</span>
<span style="left:919.09px;top:109px;font-size:16px;line-height:20px;color:#000;letter-spacing:0.586px;">3.2</span>
<span style="left:1071.49px;top:109px;font-size:16px;line-height:20px;color:#000;letter-spacing:0.310px;">Developing</span>
<span style="left:1234.17px;top:109px;font-size:16px;line-height:20px;color:#000;transform-origin:0 15px;transform:scale(0.9497,1.0000);">AMBER</span>
<span style="left:603.48px;top:142px;font-size:16px;line-height:20px;color:#000;letter-spacing:0.694px;">15</span>
<span style="left:783.56px;top:142px;font-size:16px;line-height:20px;color:#000;letter-spacing:0.812px;">54</span>
<span style="left:919.09px;top:142px;font-size:16px;line-height:20px;color:#000;letter-spacing:0.535px;">3.6</span>
<span style="left:1071.49px;top:142px;font-size:16px;line-height:20px;color:#000;letter-spacing:0.449px;">Defined</span>
<span style="left:1233.47px;top:142px;font-size:16px;line-height:20px;color:#000;transform-origin:0 15px;transform:scale(0.9071,1.0000);">GREEN</span>
<span style="left:603.48px;top:175px;font-size:16px;line-height:20px;color:#000;letter-spacing:0.694px;">15</span>
<span style="left:783.59px;top:175px;font-size:16px;line-height:20px;color:#000;letter-spacing:1.016px;">36</span>
<span style="left:918.90px;top:175px;font-size:16px;line-height:20px;color:#000;letter-spacing:0.516px;">2.4</span>
<span style="left:1071.32px;top:175px;font-size:16px;line-height:20px;color:#000;letter-spacing:0.866px;">Initial</span>
<span style="left:1232.98px;top:175px;font-size:16px;line-height:20px;color:#000;transform-origin:0 15px;transform:scale(0.9305,1.0000);">RED</span>
<span style="left:603.48px;top:208px;font-size:16px;line-height:20px;color:#000;letter-spacing:0.694px;">15</span>
<span style="left:783.83px;top:208px;font-size:16px;line-height:20px;color:#000;letter-spacing:0.742px;">45</span>
<span style="left:919.09px;top:208px;font-size:16px;line-height:20px;color:#000;letter-spacing:0.496px;">3.0</span>
<span style="left:1071.49px;top:208px;font-size:16px;line-height:20px;color:#000;letter-spacing:0.310px;">Developing</span>
<span style="left:1234.17px;top:208px;font-size:16px;line-height:20px;color:#000;transform-origin:0 15px;transform:scale(0.9497,1.0000);">AMBER</span>
<span style="left:603.48px;top:241px;font-size:16px;line-height:20px;color:#000;letter-spacing:0.694px;">15</span>
<span style="left:783.59px;top:241px;font-size:16px;line-height:20px;color:#000;letter-spacing:1.070px;">39</span>
<span style="left:918.90px;top:241px;font-size:16px;line-height:20px;color:#000;letter-spacing:0.633px;">2.6</span>
<span style="left:1071.32px;top:241px;font-size:16px;line-height:20px;color:#000;letter-spacing:0.866px;">Initial</span>
<span style="left:1232.98px;top:241px;font-size:16px;line-height:20px;color:#000;transform-origin:0 15px;transform:scale(0.9305,1.0000);">RED</span>
<span style="left:603.48px;top:274px;font-size:16px;line-height:20px;color:#000;letter-spacing:0.694px;">15</span>
<span style="left:783.56px;top:274px;font-size:16px;line-height:20px;color:#000;letter-spacing:1.125px;">51</span>
<span style="left:919.09px;top:274px;font-size:16px;line-height:20px;color:#000;letter-spacing:0.418px;">3.4</span>
<span style="left:1071.49px;top:274px;font-size:16px;line-height:20px;color:#000;letter-spacing:0.449px;">Defined</span>
<span style="left:1233.47px;top:274px;font-size:16px;line-height:20px;color:#000;transform-origin:0 15px;transform:scale(0.9071,1.0000);">GREEN</span>
<span style="left:126.10px;top:909px;font-size:17.3px;line-height:22px;color:rgba(255,255,255,.92);letter-spacing:0.105px;">Instructions</span>
<span style="left:241.13px;top:909px;font-size:17.3px;line-height:22px;color:#1e7145;font-weight:700;transform-origin:0 17px;transform:scale(0.9410,1.0000);">Scorecard</span>
<span style="left:349.60px;top:909px;font-size:17.3px;line-height:22px;color:rgba(255,255,255,.92);letter-spacing:-0.045px;">Improvement_Priorities</span>
<span style="left:560.38px;top:909px;font-size:17.3px;line-height:22px;color:rgba(255,255,255,.92);transform-origin:0 17px;transform:scale(0.9305,1.0000);">Pro_Tips_and_Mistakes</span>
<span style="left:13.25px;top:945px;font-size:12.8px;line-height:16px;color:#444;letter-spacing:-0.054px;">Ready</span>
<span style="left:137.88px;top:945px;font-size:12.8px;line-height:16px;color:#333;font-weight:700;letter-spacing:-0.014px;">Accessibility: Investigate</span>
<span style="left:1877.24px;top:945px;font-size:12.6px;line-height:16px;color:#444;letter-spacing:-0.267px;">100%</span>
<span style="left:37.06px;top:76px;font-size:16px;line-height:20px;color:#000;"><i style="display:inline-block;transform-origin:0 50%;transform:scaleX(0.9309);">[EXAMPLE</i> <i style="margin-left:-6.126px;">-</i> <i style="letter-spacing:-0.047px;margin-left:0.425px;">Replace</i> <i style="letter-spacing:1.087px;margin-left:0.314px;">with</i> <i style="letter-spacing:-0.007px;margin-left:-0.011px;">your</i> <i style="letter-spacing:0.732px;margin-left:-0.776px;">data]</i> <i style="letter-spacing:0.081px;margin-left:-1.044px;">Self-Awareness</i></span>
<span style="left:37.06px;top:109px;font-size:16px;line-height:20px;color:#000;"><i style="display:inline-block;transform-origin:0 50%;transform:scaleX(0.9309);">[EXAMPLE</i> <i style="margin-left:-6.126px;">-</i> <i style="letter-spacing:-0.047px;margin-left:0.425px;">Replace</i> <i style="letter-spacing:1.087px;margin-left:0.314px;">with</i> <i style="letter-spacing:-0.007px;margin-left:-0.011px;">your</i> <i style="letter-spacing:0.732px;margin-left:-0.776px;">data]</i> <i style="letter-spacing:0.205px;margin-left:-1.044px;">Self-Regulation</i></span>
<span style="left:37.06px;top:142px;font-size:16px;line-height:20px;color:#000;"><i style="display:inline-block;transform-origin:0 50%;transform:scaleX(0.9309);">[EXAMPLE</i> <i style="margin-left:-6.126px;">-</i> <i style="letter-spacing:-0.047px;margin-left:0.425px;">Replace</i> <i style="letter-spacing:1.087px;margin-left:0.314px;">with</i> <i style="letter-spacing:-0.007px;margin-left:-0.011px;">your</i> <i style="letter-spacing:0.732px;margin-left:-0.776px;">data]</i> <i style="letter-spacing:0.282px;margin-left:-1.630px;">Empathy Development</i></span>
<span style="left:37.06px;top:175px;font-size:16px;line-height:20px;color:#000;"><i style="display:inline-block;transform-origin:0 50%;transform:scaleX(0.9309);">[EXAMPLE</i> <i style="margin-left:-6.126px;">-</i> <i style="letter-spacing:-0.047px;margin-left:0.425px;">Replace</i> <i style="letter-spacing:1.087px;margin-left:0.314px;">with</i> <i style="letter-spacing:-0.007px;margin-left:-0.011px;">your</i> <i style="letter-spacing:0.732px;margin-left:-0.776px;">data]</i> <i style="letter-spacing:-0.005px;margin-left:-1.044px;">Social Awareness</i></span>
<span style="left:37.06px;top:208px;font-size:16px;line-height:20px;color:#000;"><i style="display:inline-block;transform-origin:0 50%;transform:scaleX(0.9309);">[EXAMPLE</i> <i style="margin-left:-6.126px;">-</i> <i style="letter-spacing:-0.047px;margin-left:0.425px;">Replace</i> <i style="letter-spacing:1.087px;margin-left:0.314px;">with</i> <i style="letter-spacing:-0.007px;margin-left:-0.011px;">your</i> <i style="letter-spacing:0.732px;margin-left:-0.776px;">data]</i> <i style="letter-spacing:0.275px;margin-left:-1.630px;">Relationship Management</i></span>
<span style="left:37.06px;top:241px;font-size:16px;line-height:20px;color:#000;"><i style="display:inline-block;transform-origin:0 50%;transform:scaleX(0.9309);">[EXAMPLE</i> <i style="margin-left:-6.126px;">-</i> <i style="letter-spacing:-0.047px;margin-left:0.425px;">Replace</i> <i style="letter-spacing:1.087px;margin-left:0.314px;">with</i> <i style="letter-spacing:-0.007px;margin-left:-0.011px;">your</i> <i style="letter-spacing:0.732px;margin-left:-0.776px;">data]</i> <i style="letter-spacing:0.473px;margin-left:-0.677px;">Team Collaboration</i></span>
<span style="left:37.06px;top:274px;font-size:16px;line-height:20px;color:#000;"><i style="display:inline-block;transform-origin:0 50%;transform:scaleX(0.9309);">[EXAMPLE</i> <i style="margin-left:-6.126px;">-</i> <i style="letter-spacing:-0.047px;margin-left:0.425px;">Replace</i> <i style="letter-spacing:1.087px;margin-left:0.314px;">with</i> <i style="letter-spacing:-0.007px;margin-left:-0.011px;">your</i> <i style="letter-spacing:0.732px;margin-left:-0.776px;">data]</i> <i style="letter-spacing:0.228px;margin-left:-1.130px;">Communication Strategies</i></span>
<span style="left:405.59px;top:366px;font-size:14.3px;line-height:18px;color:#000;font-weight:700;transform-origin:0 14px;transform:scale(1.0000,1.0400);"><i style="letter-spacing:-0.173px;">Scorecard</i> <i style="margin-left:1.357px;">—</i> <i style="display:inline-block;transform-origin:0 50%;transform:scaleX(0.9605);margin-left:-1.066px;">Score</i> <i style="letter-spacing:0.440px;margin-left:-1.899px;">Overview</i></span>
<span style="left:675.25px;top:440px;font-size:16px;line-height:20px;color:#000;transform-origin:0 15px;transform:scale(0.9245,0.9200);"><i style="display:inline-block;transform-origin:0 50%;transform:scaleX(0.9309);">[EXAMPLE</i> <i style="margin-left:-6.126px;">-</i> <i style="letter-spacing:-0.047px;margin-left:0.425px;">Replace</i> <i style="letter-spacing:1.088px;margin-left:0.314px;">with</i> <i style="letter-spacing:-0.007px;margin-left:-0.011px;">your</i> <i style="letter-spacing:0.732px;margin-left:-0.776px;">data]</i> <i style="letter-spacing:0.270px;margin-left:-1.369px;">Self-</i></span>
<span style="left:675.27px;top:460px;font-size:16px;line-height:20px;color:#000;transform-origin:0 15px;transform:scale(0.9245,0.9200);"><i style="letter-spacing:0.089px;">Awareness</i></span>
<span style="left:675.25px;top:490px;font-size:16px;line-height:20px;color:#000;transform-origin:0 15px;transform:scale(0.9245,0.9200);"><i style="display:inline-block;transform-origin:0 50%;transform:scaleX(0.9309);">[EXAMPLE</i> <i style="margin-left:-6.126px;">-</i> <i style="letter-spacing:-0.047px;margin-left:0.425px;">Replace</i> <i style="letter-spacing:1.088px;margin-left:0.314px;">with</i> <i style="letter-spacing:-0.007px;margin-left:-0.011px;">your</i> <i style="letter-spacing:0.732px;margin-left:-0.776px;">data]</i> <i style="letter-spacing:0.270px;margin-left:-1.369px;">Self-</i></span>
<span style="left:675.59px;top:510px;font-size:16px;line-height:20px;color:#000;transform-origin:0 15px;transform:scale(0.9245,0.9200);"><i style="letter-spacing:0.234px;">Regulation</i></span>
<span style="left:675.25px;top:541px;font-size:16px;line-height:20px;color:#000;transform-origin:0 15px;transform:scale(0.9245,0.9200);"><i style="display:inline-block;transform-origin:0 50%;transform:scaleX(0.9309);">[EXAMPLE</i> <i style="margin-left:-6.126px;">-</i> <i style="letter-spacing:-0.047px;margin-left:0.425px;">Replace</i> <i style="letter-spacing:1.088px;margin-left:0.314px;">with</i> <i style="letter-spacing:-0.007px;margin-left:-0.011px;">your</i> <i style="letter-spacing:0.732px;margin-left:-0.776px;">data]</i></span>
<span style="left:675.59px;top:561px;font-size:16px;line-height:20px;color:#000;transform-origin:0 15px;transform:scale(0.9245,0.9200);"><i style="letter-spacing:0.311px;">Empathy Development</i></span>
<span style="left:675.25px;top:591px;font-size:16px;line-height:20px;color:#000;transform-origin:0 15px;transform:scale(0.9245,0.9200);"><i style="display:inline-block;transform-origin:0 50%;transform:scaleX(0.9309);">[EXAMPLE</i> <i style="margin-left:-6.126px;">-</i> <i style="letter-spacing:-0.047px;margin-left:0.425px;">Replace</i> <i style="letter-spacing:1.088px;margin-left:0.314px;">with</i> <i style="letter-spacing:-0.007px;margin-left:-0.011px;">your</i> <i style="letter-spacing:0.732px;margin-left:-0.776px;">data]</i> <i style="letter-spacing:-0.053px;margin-left:-1.369px;">Social</i></span>
<span style="left:675.27px;top:611px;font-size:16px;line-height:20px;color:#000;transform-origin:0 15px;transform:scale(0.9245,0.9200);"><i style="letter-spacing:0.089px;">Awareness</i></span>
<span style="left:675.25px;top:641px;font-size:16px;line-height:20px;color:#000;transform-origin:0 15px;transform:scale(0.9245,0.9200);"><i style="display:inline-block;transform-origin:0 50%;transform:scaleX(0.9309);">[EXAMPLE</i> <i style="margin-left:-6.126px;">-</i> <i style="letter-spacing:-0.047px;margin-left:0.425px;">Replace</i> <i style="letter-spacing:1.088px;margin-left:0.314px;">with</i> <i style="letter-spacing:-0.007px;margin-left:-0.011px;">your</i> <i style="letter-spacing:0.732px;margin-left:-0.776px;">data]</i></span>
<span style="left:675.59px;top:661px;font-size:16px;line-height:20px;color:#000;transform-origin:0 15px;transform:scale(0.9245,0.9200);"><i style="letter-spacing:0.298px;">Relationship Management</i></span>
<span style="left:675.25px;top:691px;font-size:16px;line-height:20px;color:#000;transform-origin:0 15px;transform:scale(0.9245,0.9200);"><i style="display:inline-block;transform-origin:0 50%;transform:scaleX(0.9309);">[EXAMPLE</i> <i style="margin-left:-6.126px;">-</i> <i style="letter-spacing:-0.047px;margin-left:0.425px;">Replace</i> <i style="letter-spacing:1.088px;margin-left:0.314px;">with</i> <i style="letter-spacing:-0.007px;margin-left:-0.011px;">your</i> <i style="letter-spacing:0.732px;margin-left:-0.776px;">data]</i> <i style="letter-spacing:0.692px;margin-left:-1.001px;">Team</i></span>
<span style="left:676.05px;top:711px;font-size:16px;line-height:20px;color:#000;transform-origin:0 15px;transform:scale(0.9245,0.9200);"><i style="letter-spacing:0.374px;">Collaboration</i></span>
<span style="left:675.25px;top:742px;font-size:16px;line-height:20px;color:#000;transform-origin:0 15px;transform:scale(0.9245,0.9200);"><i style="display:inline-block;transform-origin:0 50%;transform:scaleX(0.9309);">[EXAMPLE</i> <i style="margin-left:-6.126px;">-</i> <i style="letter-spacing:-0.047px;margin-left:0.425px;">Replace</i> <i style="letter-spacing:1.088px;margin-left:0.314px;">with</i> <i style="letter-spacing:-0.007px;margin-left:-0.011px;">your</i> <i style="letter-spacing:0.732px;margin-left:-0.776px;">data]</i></span>
<span style="left:676.05px;top:762px;font-size:16px;line-height:20px;color:#000;transform-origin:0 15px;transform:scale(0.9245,0.9200);"><i style="letter-spacing:0.207px;">Communication Strategies</i></span>
</body></html>
